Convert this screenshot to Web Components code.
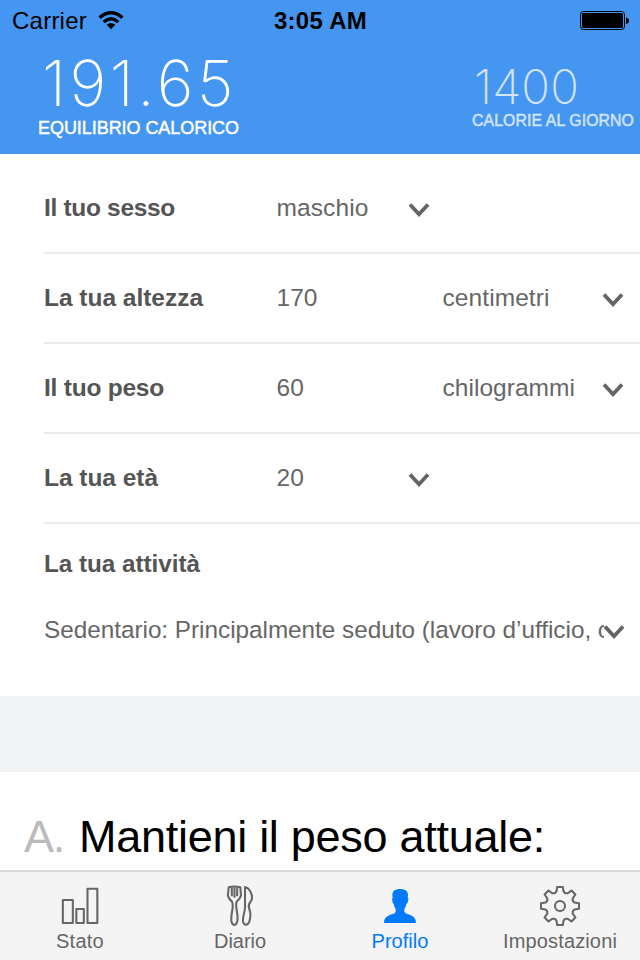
<!DOCTYPE html>
<html lang="it">
<head>
<meta charset="utf-8">
<title>Profilo</title>
<style>
html,body{margin:0;height:100%;overflow:hidden;background:#fff}
body{font-family:"Liberation Sans",Arial,sans-serif}
</style>
</head>
<body>
<profile-app></profile-app>
<script>
// Single line of text whose tracking is adjusted to a given advance width.
class FitText extends HTMLElement {
  connectedCallback() {
    const root = this.attachShadow({mode: 'open'});
    root.innerHTML = '<style>:host{display:block;white-space:nowrap}span{display:inline-block}</style><span><slot></slot></span>';
    const span = root.querySelector('span');
    const natural = span.getBoundingClientRect().width;
    span.style.letterSpacing = (this.getAttribute('w') - natural) / this.textContent.length + 'px';
  }
}

class StatusBar extends HTMLElement {
  connectedCallback() {
    this.attachShadow({mode: 'open'}).innerHTML = `<style>
      :host{display:grid;grid-template-columns:1fr auto 1fr;align-items:center;height:42px;padding:0 11px 0 12px;box-sizing:border-box;color:#000;font-size:24px;line-height:42px}
      .l{display:flex;align-items:center;gap:11px}
      .bat{justify-self:end}
      .time{font-weight:bold}
      svg{display:block}
    </style>
    <div class="l"><fit-text w="75">Carrier</fit-text>
      <svg width="26" height="20" viewBox="0 0 26 20"><g fill="none" stroke="#000" stroke-width="3.4"><path d="M1.600 6.600Q13-3 24.400 6.600"/><path d="M5.700 11Q13 4.600 20.300 11"/></g><path d="M8.700 13.800Q13 10.400 17.300 13.800L13 18.300Z"/></svg></div>
    <fit-text class="time" w="93">3:05 AM</fit-text>
    <svg class="bat" width="49" height="20" viewBox="0 0 49 20"><rect x=".5" y=".5" width="44" height="18" rx="3" fill="none" stroke="#000"/><rect x="2" y="2" width="41" height="15" rx="1.500"/><path d="M46 6.500q3 .8 3 3.200t-3 3.200Z"/></svg>`;
  }
}

class CalorieStat extends HTMLElement {
  connectedCallback() {
    this.attachShadow({mode: 'open'}).innerHTML = `<style>
      :host{display:flex;flex-direction:column;color:#fff}
      ::slotted([slot=value]){font-family:Inter,"Liberation Sans",sans-serif;font-weight:250;font-size:var(--vs);line-height:var(--vh);padding:var(--vt) 0 0 var(--vl)}
      ::slotted([slot=label]){font-size:var(--ls);line-height:20px;-webkit-text-stroke:.45px currentColor;padding-left:1px}
    </style><slot name="value"></slot><slot name="label"></slot>`;
  }
}

class DownChevron extends HTMLElement {
  connectedCallback() {
    this.attachShadow({mode: 'open'}).innerHTML = `<style>:host{display:block;width:22px;height:14px}svg{display:block}</style>
    <svg width="22" height="14" viewBox="0 0 22 14"><path d="M2 1.500L11 11.200L20 1.500" fill="none" stroke="#646464" stroke-width="3.8"/></svg>`;
  }
}

class ProfileRow extends HTMLElement {
  connectedCallback() {
    this.attachShadow({mode: 'open'}).innerHTML = `<style>
      :host{display:grid;grid-template-columns:232.500px 131.500px 34.500px 159.500px 1fr;align-items:center;height:90px;box-sizing:border-box;border-bottom:2px solid #ebebeb;margin-left:44px;color:#666;font-size:24.500px;line-height:28px}
      ::slotted([slot=label]){font-weight:bold;color:#555}
      ::slotted(down-chevron){margin-top:3px}
      ::slotted([slot=value]){grid-column:2}
      ::slotted([slot=pick]){grid-column:3}
      ::slotted([slot=unit]){grid-column:4}
      ::slotted([slot=unitpick]){grid-column:5}
    </style><slot name="label"></slot><slot name="value"></slot><slot name="pick"></slot><slot name="unit"></slot><slot name="unitpick"></slot>`;
  }
}

const gearTeeth = () => {
  const tooth = [[-5,-13],[-3.6,-14.4],[-2.8,-19],[2.8,-19],[3.6,-14.4],[5,-13]];
  const pts = [];
  for (let k = 0; k < 8; k++) {
    const a = k * Math.PI / 4, c = Math.cos(a), s = Math.sin(a);
    for (const [x, y] of tooth) pts.push((90 + 3 * (x * c - y * s)).toFixed(1) + ' ' + (93 + 3 * (x * s + y * c)).toFixed(1));
  }
  return 'M' + pts.join('L') + 'Z';
};
const icons = {
  bars: '<rect x="38.500" y="75" width="30" height="69"/><rect x="79" y="102" width="22.500" height="42"/><rect x="112.500" y="41.500" width="29.500" height="102.500"/>',
  food: '<path d="M56 37Q73 32 91 37L93 62Q90 72 80 80Q77 89 80 105Q84 125 82 138Q79 150 73 150Q67 150 64 138Q63 125 67 105Q70 90 66 80Q57 73 53.500 62Z"/><path d="M65.500 37V64M73.500 37V68M81.500 37V64"/><path d="M105 36C118 39 127 55 126 70C125 81 112 86 117 99C124 116 122 127 118 140C113 153 101 151 99 140C97 125 105 113 105 97Z"/>',
  person: '<path fill="currentColor" stroke="none" d="M67 60C67 48 76 42 90 42C105 42 114 48 114 60L113 69Q117 69 114 79Q113 86 109 87Q107 97 103 102V110L107 115C120 121 138 123 138 144H42C42 123 60 121 74 115L77 110V102Q73 96 71 87Q68 86 67 77Q65 69 68 69Z"/>',
  gear: `<path d="${gearTeeth()}"/><circle cx="90" cy="93" r="15"/>`
};
class TabItem extends HTMLElement {
  connectedCallback() {
    this.attachShadow({mode: 'open'}).innerHTML = `<style>
      :host{display:flex;flex-direction:column;align-items:center;width:160px;color:#666;font-size:20px;line-height:30px}
      :host([active]){color:#007aff}
      svg{display:block}
    </style>
    <svg width="42" height="42" viewBox="27 27 126 126" fill="none" stroke="currentColor" stroke-width="6.2" stroke-linejoin="round">${icons[this.getAttribute('icon')]}</svg><slot></slot>`;
  }
}

class ProfileApp extends HTMLElement {
  connectedCallback() {
    this.attachShadow({mode: 'open'}).innerHTML = `<style>
      :host{display:flex;flex-direction:column;width:640px;height:960px;background:#fff;overflow:hidden}
      header{height:154px;background:#4596f1;flex:none}
      .stats{display:flex;justify-content:space-between;align-items:flex-start;padding:0 6px 0 37px}
      .main{--vs:63px;--vh:70px;--vt:6px;--vl:5px;--ls:18px}
      .goal{--vs:47.500px;--vh:48px;--vt:21px;--vl:3px;--ls:15.800px;opacity:.75}
      .form{height:532px;padding-top:10px;box-sizing:border-box;flex:none}
      .activity{margin-left:44px;font-size:24.300px;color:#666}
      .activity h2{margin:0;font-size:24.300px;line-height:80px;color:#555}
      .pick{display:flex;align-items:center;height:52px}
      .pick down-chevron{margin-top:3px}
      .clip{width:560px;margin-right:-1px;overflow:hidden}
      .gap{height:76px;background:#f1f3f5;flex:none}
      .form + .gap{margin-top:10px}
      .plan{display:flex;font-size:45px;line-height:50px;padding:40px 0 0 24px;height:98px;box-sizing:border-box;flex:none;color:#000;gap:15px}
      .plan .n{color:#bbb}
      nav{display:flex;height:90px;box-sizing:border-box;border-top:2px solid #dadada;background:#f4f4f4;padding-top:12px;flex:none}
    </style>
    <header>
      <status-bar></status-bar>
      <div class="stats">
        <calorie-stat class="main"><fit-text slot="value" w="195">191.65</fit-text><fit-text slot="label" w="201">EQUILIBRIO CALORICO</fit-text></calorie-stat>
        <calorie-stat class="goal"><fit-text slot="value" w="105">1400</fit-text><fit-text slot="label" w="162">CALORIE AL GIORNO</fit-text></calorie-stat>
      </div>
    </header>
    <section class="form">
      <profile-row><fit-text slot="label" w="131">Il tuo sesso</fit-text><fit-text slot="value" w="92">maschio</fit-text><down-chevron slot="pick"></down-chevron></profile-row>
      <profile-row><fit-text slot="label" w="159">La tua altezza</fit-text><fit-text slot="value" w="41">170</fit-text><fit-text slot="unit" w="107">centimetri</fit-text><down-chevron slot="unitpick"></down-chevron></profile-row>
      <profile-row><fit-text slot="label" w="120">Il tuo peso</fit-text><fit-text slot="value" w="27.500">60</fit-text><fit-text slot="unit" w="132.500">chilogrammi</fit-text><down-chevron slot="unitpick"></down-chevron></profile-row>
      <profile-row><fit-text slot="label" w="114">La tua età</fit-text><fit-text slot="value" w="27.500">20</fit-text><down-chevron slot="pick"></down-chevron></profile-row>
      <div class="activity"><h2><fit-text w="156">La tua attività</fit-text></h2>
        <div class="pick"><div class="clip"><fit-text w="566">Sedentario: Principalmente seduto (lavoro d’ufficio, c</fit-text></div><down-chevron></down-chevron></div></div>
    </section>
    <div class="gap"></div>
    <section class="plan"><fit-text class="n" w="40">A.</fit-text><fit-text w="466">Mantieni il peso attuale:</fit-text></section>
    <nav>
      <tab-item icon="bars"><fit-text w="48">Stato</fit-text></tab-item>
      <tab-item icon="food"><fit-text w="52">Diario</fit-text></tab-item>
      <tab-item icon="person" active><fit-text w="57">Profilo</fit-text></tab-item>
      <tab-item icon="gear"><fit-text w="114">Impostazioni</fit-text></tab-item>
    </nav>`;
  }
}
// Containers come first so that texts are measured once their slots are styled.
customElements.define('profile-app', ProfileApp);
customElements.define('status-bar', StatusBar);
customElements.define('calorie-stat', CalorieStat);
customElements.define('profile-row', ProfileRow);
customElements.define('tab-item', TabItem);
customElements.define('down-chevron', DownChevron);
customElements.define('fit-text', FitText);
</script>
</body>
</html>
